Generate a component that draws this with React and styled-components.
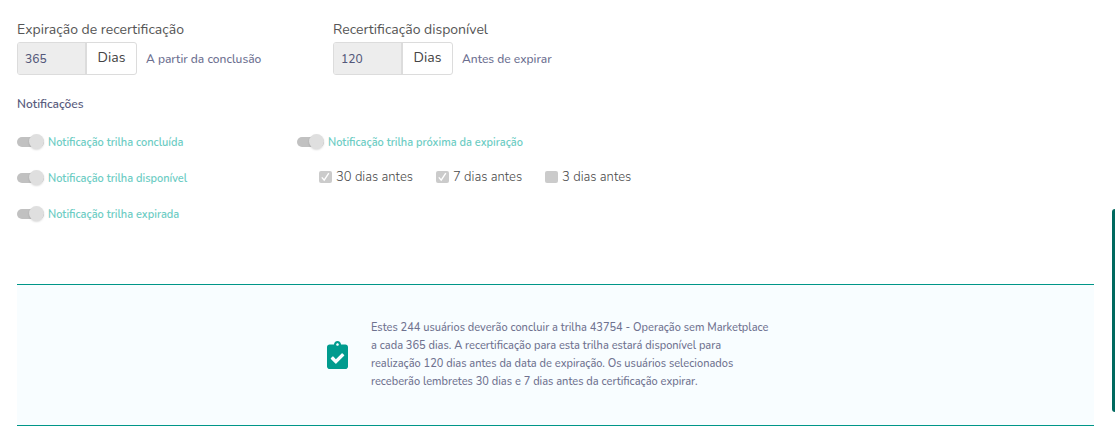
import React from "react";
import styled, { createGlobalStyle } from "styled-components";
import { FaClipboardCheck } from "react-icons/fa";

const GlobalStyle = createGlobalStyle`
  *, *::before, *::after { box-sizing: border-box; }
  body {
    margin: 0;
    background: #fff;
    color: #555;
    font-family: Nunito, Lato, "Open Sans", sans-serif;
    font-size: 14px;
  }
`;

const Page = styled.main`
  padding: 20px 21px 20px 17px;
`;

const Fields = styled.div`
  display: flex;
  flex-wrap: wrap;
  row-gap: 16px;
`;

const Field = styled.div`
  flex: 0 0 auto;
  min-width: 316px;
`;

const FieldLabel = styled.label`
  display: block;
  height: 22px;
  font-size: 14px;
  line-height: 20px;
`;

const FieldRow = styled.div`
  display: flex;
  align-items: center;
  gap: 9px;
`;

const InputGroup = styled.div`
  display: flex;
  height: 33px;
  border: 1px solid #dcdcdc;
  border-radius: 3px;
  overflow: hidden;
`;

const DaysInput = styled.input`
  width: 67px;
  padding: 0 7px;
  border: 0;
  background: #ededed;
  color: #54587a;
  font: inherit;
  font-size: 12px;
  font-weight: 500;
`;

const Unit = styled.span`
  width: 51px;
  border-left: 2px solid #dcdcdc;
  color: #444;
  font-size: 14px;
  line-height: 30px;
  text-align: center;
`;

const Hint = styled.span`
  color: #6c6f90;
  font-size: 12px;
  font-weight: 500;
  line-height: 18px;
`;

const SectionTitle = styled.h2`
  margin: 19px 0 0;
  color: #5a5d7e;
  font-size: 12px;
  font-weight: 600;
  line-height: 20px;
`;

const Notifications = styled.div`
  display: flex;
  flex-wrap: wrap;
  margin-top: 18px;
`;

const Column = styled.div`
  display: flex;
  flex-direction: column;
  gap: 14px;
  min-width: 280px;
`;

const SwitchLabel = styled.label`
  display: flex;
  align-items: center;
  gap: 4px;
  color: #6cccc3;
  font-size: 11px;
  font-weight: 600;
  line-height: 22px;
`;

const Switch = styled.input`
  appearance: none;
  display: grid;
  align-items: center;
  flex: none;
  width: 27px;
  height: 15px;
  margin: 0 0 3px;

  &::before,
  &::after {
    content: "";
    grid-area: 1 / 1;
  }
  &::before {
    height: 10px;
    border-radius: 5px;
    background: #c1c1c1;
  }
  &::after {
    justify-self: end;
    width: 15px;
    height: 15px;
    border-radius: 50%;
    background: #dfdfdf;
    box-shadow: 0 1px 2px rgba(0, 0, 0, 0.15);
  }
`;

const Reminders = styled.div`
  display: flex;
  gap: 23px;
  padding-left: 22px;
`;

const ReminderLabel = styled.label`
  display: flex;
  align-items: center;
  gap: 4px;
  color: #4a4a4a;
  font-size: 13px;
  font-weight: 300;
  line-height: 18px;
`;

const CheckWrap = styled.span`
  display: grid;
  place-items: center;
  width: 13px;
  height: 12px;

  & > * { grid-area: 1 / 1; }
`;

const Checkbox = styled.input`
  appearance: none;
  width: 13px;
  height: 12px;
  margin: 0;
  border-radius: 2px;
  background: #cbcbcb;
`;

const Summary = styled.section`
  display: flex;
  align-items: center;
  justify-content: center;
  gap: 23px;
  margin-top: 58px;
  padding: 34px 16px;
  border-top: 1px solid #009688;
  border-bottom: 1px solid #009688;
  background: #f8fdff;
`;

const SummaryIcon = styled(FaClipboardCheck)`
  flex: none;
  width: 21px;
  height: 28px;
  color: #009b8e;
`;

const SummaryText = styled.p`
  width: 413px;
  margin: 0;
  color: #6f728f;
  font-size: 11px;
  font-weight: 500;
  line-height: 18px;
`;

const SideTab = styled.aside`
  position: fixed;
  top: 209px;
  right: 0;
  width: 3px;
  height: 203px;
  border-radius: 3px 0 0 3px;
  background: #00695f;
`;

function DaysField({ id, label, value, hint }) {
  return (
    <Field>
      <FieldLabel htmlFor={id}>{label}</FieldLabel>
      <FieldRow>
        <InputGroup>
          <DaysInput id={id} type="text" defaultValue={value} disabled />
          <Unit>Dias</Unit>
        </InputGroup>
        <Hint>{hint}</Hint>
      </FieldRow>
    </Field>
  );
}

function Toggle({ children }) {
  return (
    <SwitchLabel>
      <Switch type="checkbox" role="switch" defaultChecked disabled />
      {children}
    </SwitchLabel>
  );
}

function Reminder({ days, checked }) {
  return (
    <ReminderLabel>
      <CheckWrap>
        <Checkbox type="checkbox" defaultChecked={checked} disabled />
        {checked && (
          <svg width="13" height="12" viewBox="0 0 13 12" fill="none" aria-hidden="true">
            <path d="M2.8 6.4 5.2 9.2 9.8 2.2" stroke="#fff" strokeWidth="1.4" />
          </svg>
        )}
      </CheckWrap>
      {days} dias antes
    </ReminderLabel>
  );
}

export default function App() {
  return (
    <>
      <GlobalStyle />
      <Page>
        <Fields>
          <DaysField id="expiracao" label="Expiração de recertificação" value="365" hint="A partir da conclusão" />
          <DaysField id="disponivel" label="Recertificação disponível" value="120" hint="Antes de expirar" />
        </Fields>

        <SectionTitle>Notificações</SectionTitle>
        <Notifications>
          <Column>
            <Toggle>Notificação trilha concluída</Toggle>
            <Toggle>Notificação trilha disponível</Toggle>
            <Toggle>Notificação trilha expirada</Toggle>
          </Column>
          <Column>
            <Toggle>Notificação trilha próxima da expiração</Toggle>
            <Reminders>
              <Reminder days={30} checked />
              <Reminder days={7} checked />
              <Reminder days={3} checked={false} />
            </Reminders>
          </Column>
        </Notifications>

        <Summary>
          <SummaryIcon aria-hidden="true" />
          <SummaryText>
            Estes 244 usuários deverão concluir a trilha 43754 - Operação sem Marketplace
            <br />
            a cada 365 dias. A recertificação para esta trilha estará disponível para
            <br />
            realização 120 dias antes da data de expiração. Os usuários selecionados
            <br />
            receberão lembretes 30 dias e 7 dias antes da certificação expirar.
          </SummaryText>
        </Summary>
      </Page>
      <SideTab />
    </>
  );
}
